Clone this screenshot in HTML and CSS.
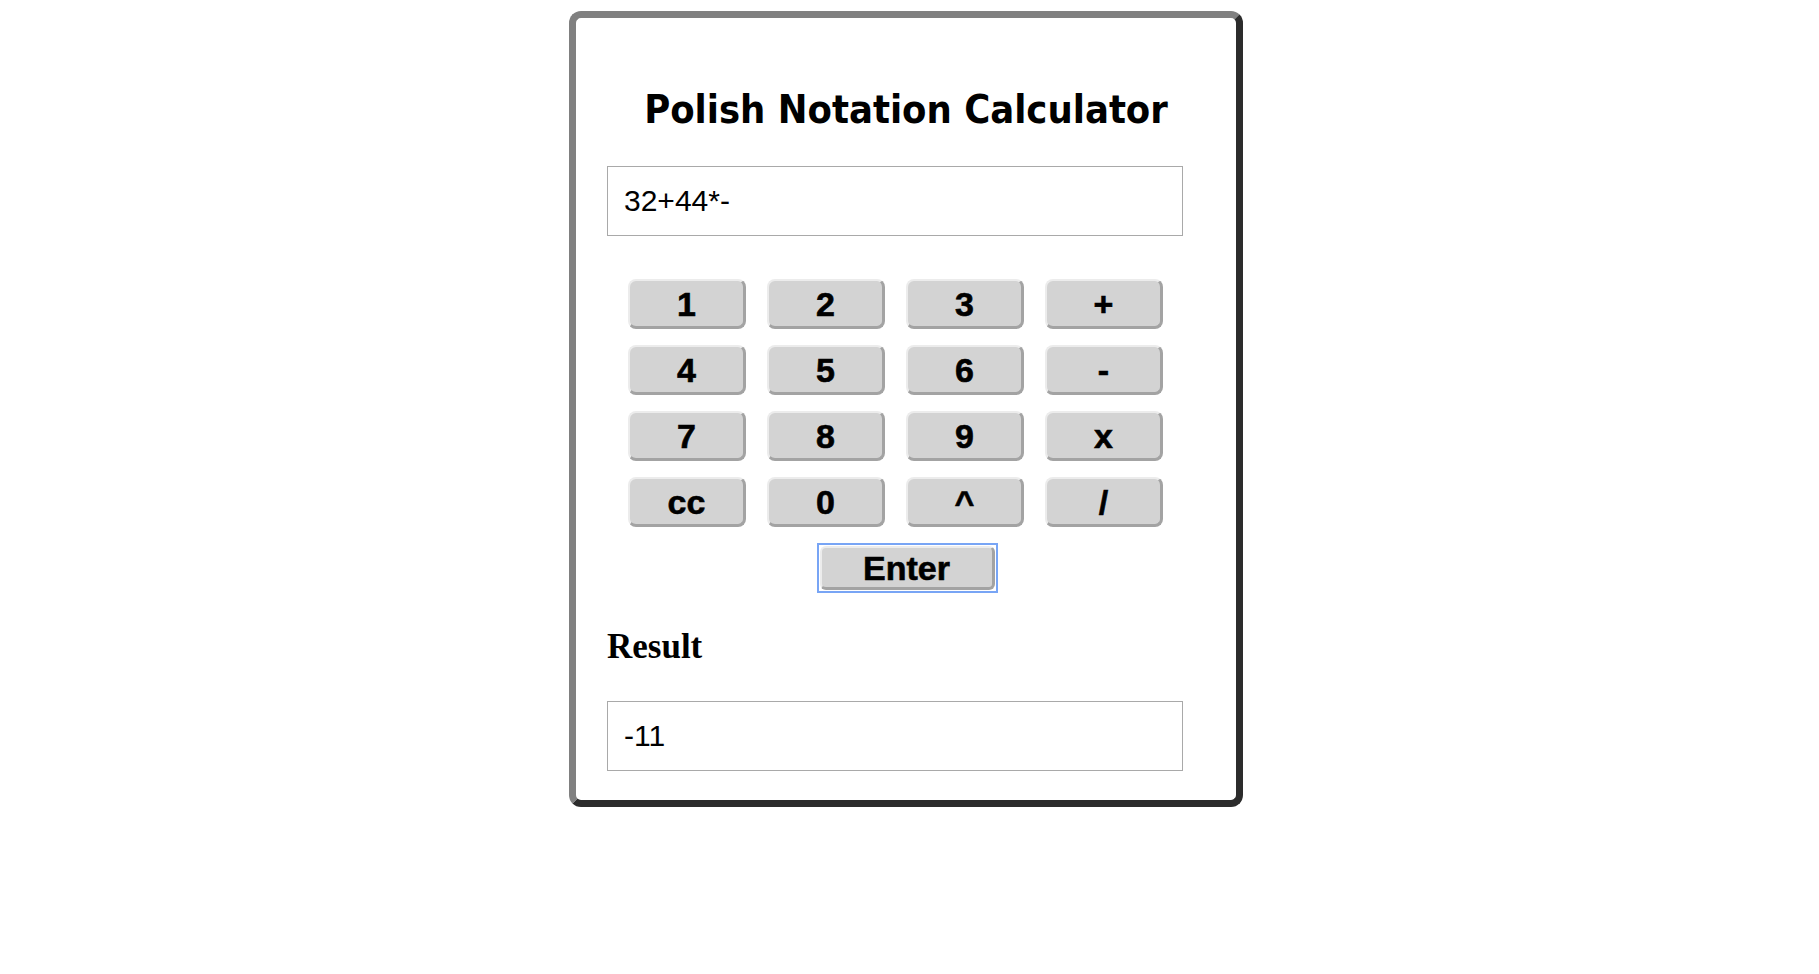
FILE: index.html
```html
<!DOCTYPE html>
<html>
<head>
<meta charset="utf-8">
<title>Polish Notation Calculator</title>
<link rel="stylesheet" href="styles.css">
</head>
<body>
<div class="page">
  <div class="calc">
    <h1 class="title">Polish Notation Calculator</h1>
    <div class="field">32+44*-</div>
    <div class="keypad">
      <button class="key">1</button>
      <button class="key">2</button>
      <button class="key">3</button>
      <button class="key">+</button>
      <button class="key">4</button>
      <button class="key">5</button>
      <button class="key">6</button>
      <button class="key">-</button>
      <button class="key">7</button>
      <button class="key">8</button>
      <button class="key">9</button>
      <button class="key">x</button>
      <button class="key">cc</button>
      <button class="key">0</button>
      <button class="key">^</button>
      <button class="key">/</button>
    </div>
    <div class="enter-row">
      <span class="focus-ring"><button class="key enter">Enter</button></span>
    </div>
    <h2 class="result-label">Result</h2>
    <div class="field result">-11</div>
  </div>
</div>
</body>
</html>
```

FILE: styles.css
```css
html, body {
  margin: 0;
  padding: 0;
  background: #ffffff;
}

.page {
  display: flex;
  justify-content: center;
  padding: 11px 7px 0 0;
}

.calc {
  width: 660px;
  height: 782px;
  border-style: solid;
  border-width: 7px;
  border-color: #808080 #2c2c2c #2c2c2c #808080;
  border-radius: 12px;
  background: #fff;
  display: flex;
  flex-direction: column;
}

.title {
  margin: 67px 0 0 0;
  height: 48px;
  line-height: 48px;
  text-align: center;
  font-family: "DejaVu Sans Condensed", "DejaVu Sans", sans-serif;
  font-stretch: condensed;
  font-weight: bold;
  font-size: 39.5px;
  color: #000;
}

.field {
  margin: 33px 0 0 31px;
  width: 576px;
  height: 70px;
  box-sizing: border-box;
  border: 1px solid #a9a9a9;
  padding: 0 16px;
  display: flex;
  align-items: center;
  font-family: "Liberation Sans", Arial, sans-serif;
  font-size: 30px;
  color: #000;
}

.keypad {
  margin: 43px 0 0 52px;
  display: grid;
  grid-template-columns: repeat(4, 118px);
  grid-auto-rows: 50px;
  column-gap: 21px;
  row-gap: 16px;
}

.key {
  box-sizing: border-box;
  margin: 0;
  padding: 0;
  background: #d3d3d3;
  border-style: solid;
  border-width: 2px 3px 3px 2px;
  border-color: #ececec #a3a3a3 #a3a3a3 #ececec;
  border-radius: 8px;
  font-family: "Liberation Sans", Arial, sans-serif;
  font-weight: bold;
  font-size: 34px;
  -webkit-text-stroke: 0.6px #000;
  color: #000;
  line-height: 1;
}

.enter-row {
  margin-top: 16px;
  padding-left: 2px;
  display: flex;
  justify-content: center;
}

.focus-ring {
  display: block;
  border: 2px solid #78a5f5;
  width: 181px;
  height: 50px;
  box-sizing: border-box;
  padding: 1px;
}

.enter {
  width: 100%;
  height: 100%;
  border-radius: 6px;
}

.result-label {
  margin: 34px 0 0 31px;
  height: 40px;
  line-height: 40px;
  font-family: "Liberation Serif", "Times New Roman", serif;
  font-weight: bold;
  font-size: 35px;
  color: #000;
}

.result {
  margin-top: 34px;
}
```
